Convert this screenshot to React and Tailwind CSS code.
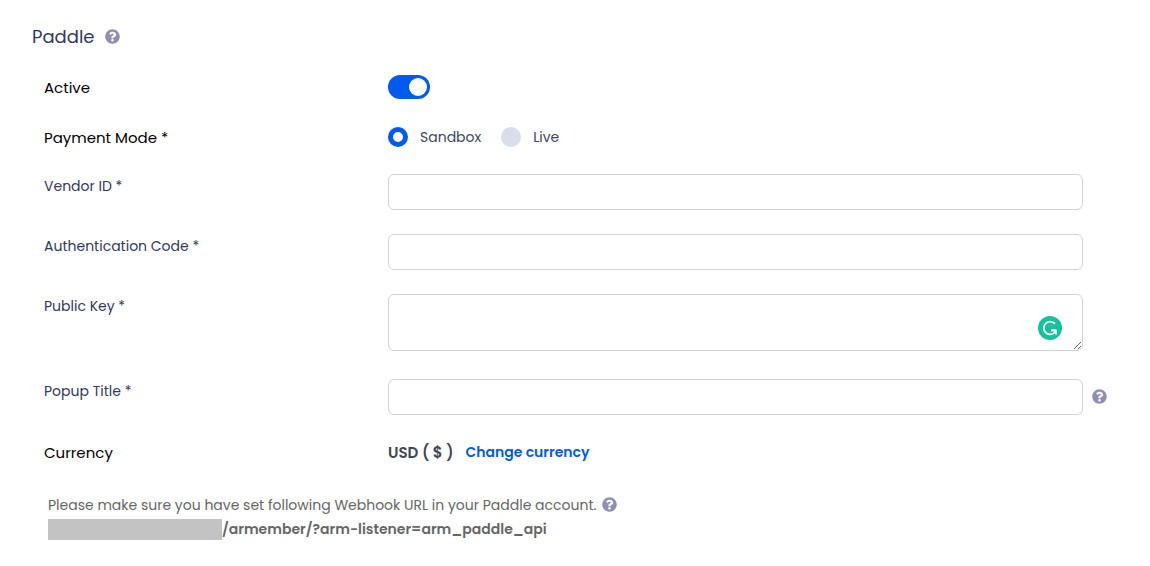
import { useState } from 'react'
import { FaQuestionCircle } from 'react-icons/fa'

const inputClass = 'block w-full min-w-0 rounded-md border border-[#cfd2df] bg-white px-3 text-sm text-[#3e4857] outline-none focus:border-[#005aee]'
const rowLabelClass = 'w-[344px] shrink-0 pt-0.5 text-[15px] text-black'

function Help({ label }) {
    return (
        <button type="button" aria-label={label} className="shrink-0 cursor-pointer pb-0.5 text-[#8f8fb3]">
            <FaQuestionCircle size={15} />
        </button>
    )
}

function GrammarBadge() {
    return (
        <svg viewBox="0 0 24 24" className="absolute right-[21px] bottom-[11px] h-6 w-6" aria-hidden="true">
            <circle cx="12" cy="12" r="12" fill="#15c39a" />
            <path
                d="M16.9 7.6A6.4 6.4 0 1 0 16.6 16.6L17.6 14.6M13 14.4H18"
                fill="none"
                stroke="#fff"
                strokeWidth="1.7"
            />
            <path d="M13.2 13.5H18.8V18.6H17.2V15.2H13.2Z" fill="#fff" />
        </svg>
    )
}

// Label column + control column; the narrow slot on the right holds the help icon
function Field({ id, label, help, children }) {
    return (
        <div className="flex items-start">
            <label htmlFor={id} className="w-[344px] shrink-0 text-sm leading-6 text-[#32395c]">
                {label}
            </label>
            <div className="relative min-w-0 flex-1">{children}</div>
            <div className="flex w-6 shrink-0 justify-end self-center">
                {help && <Help label={help} />}
            </div>
        </div>
    )
}

export default function App() {
    const [active, setActive] = useState(true)
    const [mode, setMode] = useState('sandbox')

    return (
        <main className="bg-white py-6 pr-[43px] pl-8 font-[Poppins,Inter,sans-serif] text-[#3e4857]">
            <div className="flex h-[26px] items-center gap-[10px]">
                <h1 className="text-lg text-[#32395c]">Paddle</h1>
                <Help label="About Paddle" />
            </div>

            <form className="mt-6 pl-3">
                <div className="flex h-[26px] items-center">
                    <label htmlFor="active" className={rowLabelClass}>Active</label>
                    <input
                        id="active"
                        type="checkbox"
                        role="switch"
                        checked={active}
                        onChange={(e) => setActive(e.target.checked)}
                        className="flex h-6 w-[42px] cursor-pointer appearance-none items-center rounded-full bg-[#d9dfea] px-[3px] before:h-[18px] before:w-[18px] before:rounded-full before:bg-white checked:justify-end checked:bg-[#005aee]"
                    />
                </div>

                <fieldset className="mt-6 flex h-[26px] items-center">
                    <legend className={`float-left ${rowLabelClass}`}>Payment Mode *</legend>
                    <div className="flex items-center gap-5">
                        {[['sandbox', 'Sandbox'], ['live', 'Live']].map(([value, text]) => (
                            <label key={value} className="flex cursor-pointer items-center gap-3 text-sm">
                                <input
                                    type="radio"
                                    name="mode"
                                    value={value}
                                    checked={mode === value}
                                    onChange={() => setMode(value)}
                                    className="h-5 w-5 appearance-none rounded-full bg-[#d9dfea] checked:border-5 checked:border-[#005aee] checked:bg-white"
                                />
                                {text}
                            </label>
                        ))}
                    </div>
                </fieldset>

                <div className="mt-6 flex flex-col gap-6">
                    <Field id="vendor" label="Vendor ID *">
                        <input id="vendor" type="text" className={`${inputClass} h-9`} />
                    </Field>
                    <Field id="auth" label="Authentication Code *">
                        <input id="auth" type="text" className={`${inputClass} h-9`} />
                    </Field>
                    <Field id="key" label="Public Key *">
                        <textarea id="key" className={`${inputClass} h-[57px] resize py-2`} />
                        <GrammarBadge />
                    </Field>
                </div>

                <div className="mt-7">
                    <Field id="popup" label="Popup Title *" help="About the popup title">
                        <input id="popup" type="text" className={`${inputClass} h-9`} />
                    </Field>
                </div>

                <div className="mt-6 flex h-[26px] items-center">
                    <span className={rowLabelClass}>Currency</span>
                    <span className="pt-0.5 text-[15px] font-semibold">USD ( $ )</span>
                    <a href="#currency" className="ml-3 text-sm font-semibold text-[#005aee]">Change currency</a>
                </div>
            </form>

            <div className="mt-7 pl-4 text-sm leading-6 text-[#666]">
                <div className="flex items-center gap-[6px]">
                    <p>Please make sure you have set following Webhook URL in your Paddle account.</p>
                    <Help label="About the webhook URL" />
                </div>
                <p className="flex items-center font-semibold">
                    <span className="h-[21px] w-[174px] shrink-0 bg-[#c3c3c3]" />
                    /armember/?arm-listener=arm_paddle_api
                </p>
            </div>
        </main>
    )
}
